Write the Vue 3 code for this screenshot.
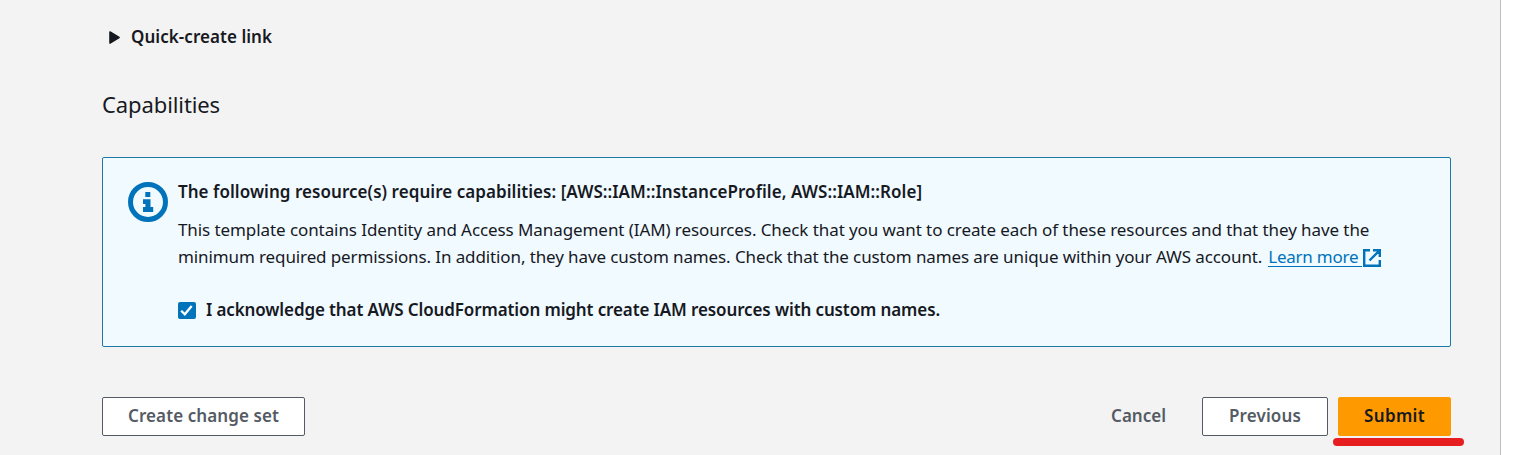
<script setup>
import { ref } from 'vue'

const acknowledged = ref(true)
</script>

<template>
  <main class="page">
    <div class="expander">
      <svg class="caret" width="11" height="13" viewBox="0 0 11 13" aria-hidden="true">
        <path d="M1 1 L10 6.5 L1 12 Z" fill="#16191f" stroke="#16191f" stroke-width="1.6" stroke-linejoin="round" />
      </svg>
      <span class="quick">Quick-create link</span>
    </div>

    <h2 class="title">Capabilities</h2>

    <section class="alert">
      <svg class="info" width="40" height="40" viewBox="0 0 40 40" aria-hidden="true">
        <circle cx="20" cy="20" r="17.5" fill="none" stroke="#0073bb" stroke-width="5" />
        <path d="M17.3 10h5v5h-5z M15 17.2h7.5v7.8h2.7v5H15v-5h2.4v-3H15z" fill="#0073bb" />
      </svg>
      <div class="body">
        <p class="heading">The following resource(s) require capabilities: [AWS::IAM::InstanceProfile, AWS::IAM::Role]</p>
        <p class="line first">This template contains Identity and Access Management (IAM) resources. Check that you want to create each of these resources and that they have the</p>
        <p class="line second">
          <span>minimum required permissions. In addition, they have custom names. Check that the custom names are unique within your AWS account.</span>
          <a class="learn"><span class="learn-text">Learn more</span><svg class="external" width="18" height="18" viewBox="0 0 18 18" aria-hidden="true">
            <path d="M7 1.2H1.2V16.8H16.8V11 M10 1.2H16.8V8 M16.5 1.5L6.5 11.5" fill="none" stroke="#0073bb" stroke-width="2.4" />
          </svg></a>
        </p>
        <label class="ack">
          <input v-model="acknowledged" class="native" type="checkbox">
          <span class="box" :class="{ checked: acknowledged }">
            <svg v-if="acknowledged" width="17" height="17" viewBox="0 0 17 17" aria-hidden="true">
              <path d="M3.2 8.7L6.8 12.3L13.7 4" fill="none" stroke="#fff" stroke-width="2.3" />
            </svg>
          </span>
          <span>I acknowledge that AWS CloudFormation might create IAM resources with custom names.</span>
        </label>
      </div>
    </section>

    <footer class="actions">
      <button class="btn create">Create change set</button>
      <button class="btn cancel">Cancel</button>
      <button class="btn previous">Previous</button>
      <button class="btn submit">Submit<span class="marker"></span></button>
    </footer>
  </main>
</template>

<style>
body {
  background: #fff;
  overflow: hidden;
}
</style>

<style scoped>
.page {
  box-sizing: border-box;
  width: 1501px;
  height: 455px;
  padding: 23px 49px 0 102px;
  border-right: 1px solid #bfbfbf;
  background: #f3f3f3;
  color: #16191f;
  font-family: "Noto Sans", "Open Sans", sans-serif;
  font-size: 17px;
  line-height: 27px;
  white-space: nowrap;
}
.expander {
  display: flex;
  align-items: center;
  gap: 11px;
  height: 27px;
  padding-left: 7px;
  font-weight: 600;
}
.caret {
  margin-top: 2px;
}
.quick {
  letter-spacing: 0.05px;
}
.title {
  margin: 39px 0 0;
  font-size: 22px;
  font-weight: 400;
  line-height: 30px;
  letter-spacing: -0.1px;
}
.alert {
  box-sizing: border-box;
  display: flex;
  gap: 10px;
  height: 190px;
  margin-top: 38px;
  padding: 20px 0 0 25px;
  border: 1px solid #1c78a5;
  border-radius: 2px;
  background: #f1faff;
}
.info {
  flex: none;
  margin-top: 4px;
}
p {
  margin: 0;
}
.heading {
  font-weight: 600;
  letter-spacing: 0.05px;
}
.first {
  margin-top: 11px;
  letter-spacing: -0.083px;
}
.second {
  display: flex;
  gap: 6px;
  letter-spacing: -0.11px;
}
.learn {
  display: flex;
  color: #0073bb;
  letter-spacing: -0.24px;
}
.learn-text {
  height: 23px;
  padding-right: 4px;
  border-bottom: 1px solid #0073bb;
}
.external {
  margin-top: 6px;
  margin-left: 1px;
}
.ack {
  display: flex;
  align-items: center;
  gap: 10px;
  margin-top: 26px;
  font-weight: 600;
  letter-spacing: -0.115px;
}
.native {
  position: absolute;
  opacity: 0;
  pointer-events: none;
}
.box {
  box-sizing: border-box;
  width: 18px;
  height: 17px;
  margin-top: 2px;
  border: 1px solid #687078;
  border-radius: 2px;
  background: #fff;
}
.box.checked {
  border: 0;
  background: #0073bb;
}
.box svg {
  display: block;
}
.actions {
  display: flex;
  margin-top: 50px;
}
.btn {
  box-sizing: border-box;
  height: 39px;
  padding: 0 0 2px;
  border: 1px solid #545b64;
  border-radius: 2px;
  background: #fff;
  color: #545b64;
  font: inherit;
  font-weight: 600;
}
.create {
  width: 203px;
  margin-right: auto;
  letter-spacing: 0.09px;
}
.cancel {
  width: 109px;
  margin-right: 9px;
  border-color: transparent;
  background: transparent;
}
.previous {
  width: 126px;
  margin-right: 10px;
  letter-spacing: 0.13px;
}
.submit {
  position: relative;
  width: 113px;
  border-color: #ff9900;
  background: #ff9900;
  color: #16191f;
  letter-spacing: 0.35px;
}
.marker {
  position: absolute;
  left: -6px;
  top: 40px;
  width: 131px;
  height: 8px;
  border-radius: 4px;
  background: #e61e20;
}
</style>
